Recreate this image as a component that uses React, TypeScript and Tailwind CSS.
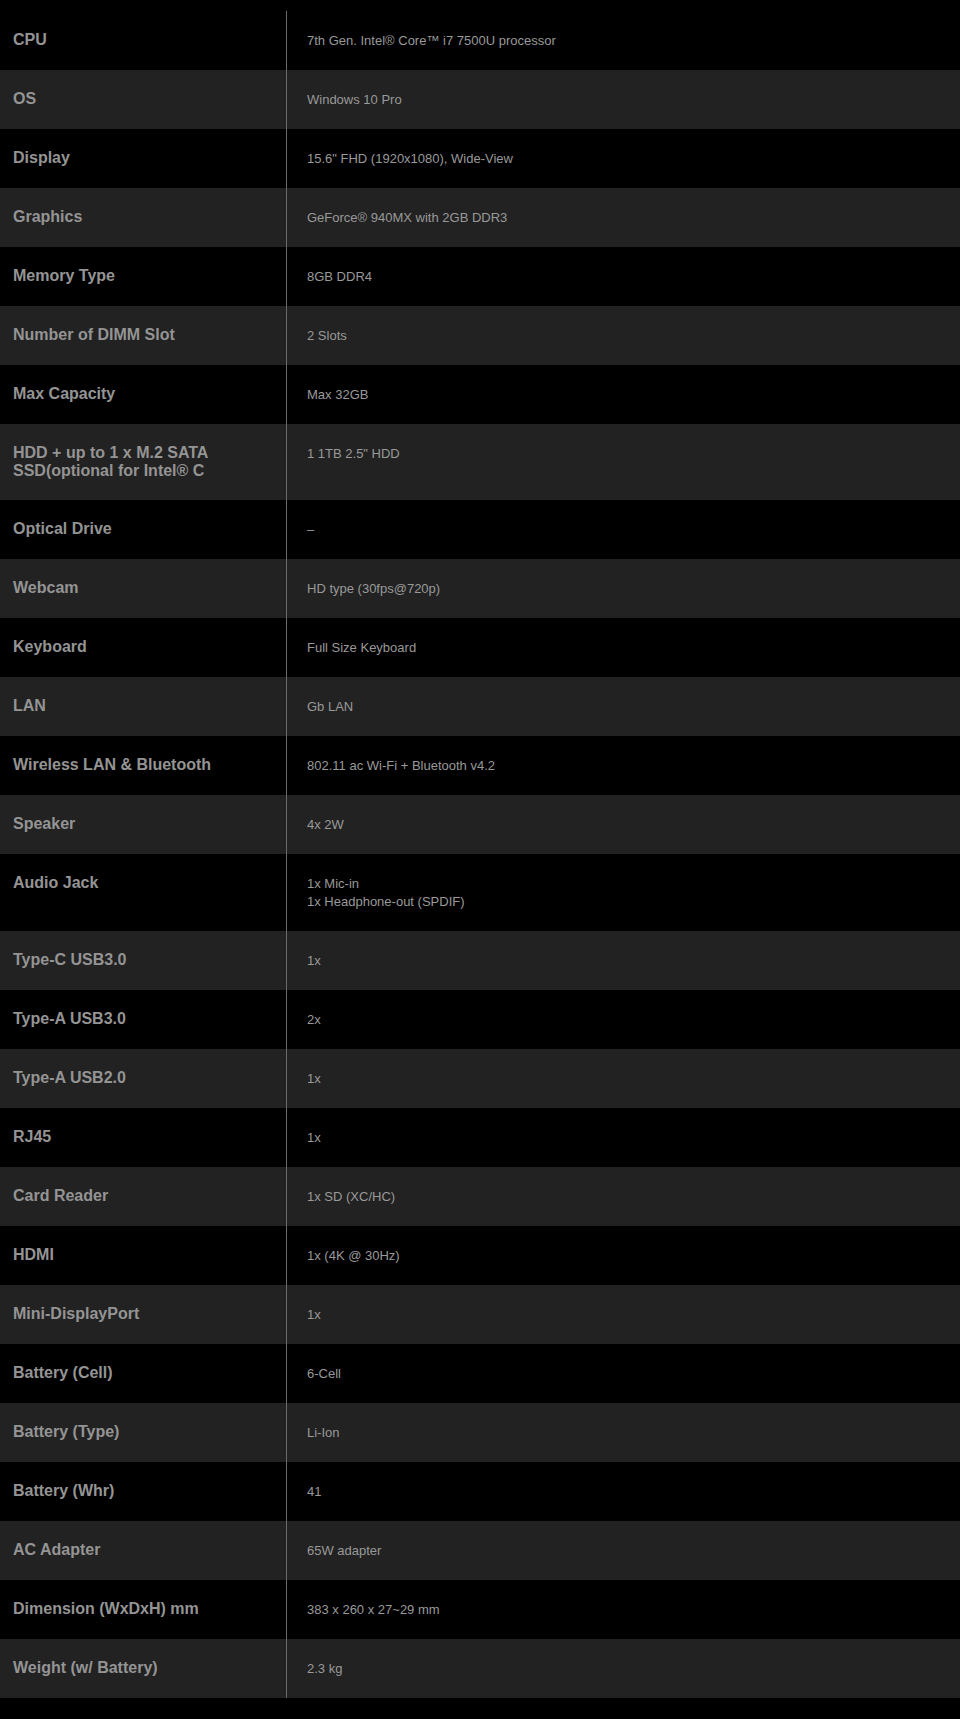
const specs: { label: string; value: string[] }[] = [
  { label: "CPU", value: ["7th Gen. Intel® Core™ i7 7500U processor"] },
  { label: "OS", value: ["Windows 10 Pro"] },
  { label: "Display", value: ["15.6\" FHD (1920x1080), Wide-View"] },
  { label: "Graphics", value: ["GeForce® 940MX with 2GB DDR3"] },
  { label: "Memory Type", value: ["8GB DDR4"] },
  { label: "Number of DIMM Slot", value: ["2 Slots"] },
  { label: "Max Capacity", value: ["Max 32GB"] },
  { label: "HDD + up to 1 x M.2 SATA SSD(optional for Intel® C", value: ["1 1TB 2.5\" HDD"] },
  { label: "Optical Drive", value: ["–"] },
  { label: "Webcam", value: ["HD type (30fps@720p)"] },
  { label: "Keyboard", value: ["Full Size Keyboard"] },
  { label: "LAN", value: ["Gb LAN"] },
  { label: "Wireless LAN & Bluetooth", value: ["802.11 ac Wi-Fi + Bluetooth v4.2"] },
  { label: "Speaker", value: ["4x 2W"] },
  { label: "Audio Jack", value: ["1x Mic-in", "1x Headphone-out (SPDIF)"] },
  { label: "Type-C USB3.0", value: ["1x"] },
  { label: "Type-A USB3.0", value: ["2x"] },
  { label: "Type-A USB2.0", value: ["1x"] },
  { label: "RJ45", value: ["1x"] },
  { label: "Card Reader", value: ["1x SD (XC/HC)"] },
  { label: "HDMI", value: ["1x (4K @ 30Hz)"] },
  { label: "Mini-DisplayPort", value: ["1x"] },
  { label: "Battery (Cell)", value: ["6-Cell"] },
  { label: "Battery (Type)", value: ["Li-Ion"] },
  { label: "Battery (Whr)", value: ["41"] },
  { label: "AC Adapter", value: ["65W adapter"] },
  { label: "Dimension (WxDxH) mm", value: ["383 x 260 x 27~29 mm"] },
  { label: "Weight (w/ Battery)", value: ["2.3 kg"] },
];

export default function App() {
  return (
    <div className="min-h-[1719px] bg-black pt-[11px] pb-[20px] font-['Liberation_Sans',Arial,sans-serif]">
      <div className="flex flex-col">
        {specs.map((row, i) => (
          <div key={row.label} className={`flex min-h-[59px] ${i % 2 === 1 ? "bg-[#222222]" : "bg-black"}`}>
            {/* label */}
            <div className="w-[287px] shrink-0 border-r border-[#6a6a6a] pl-[13px] pr-[70px] py-[20px] text-[16px] leading-[18px] font-bold text-[#949494]">
              {row.label}
            </div>
            {/* value */}
            <div className="flex-1 pl-[20px] pt-[21px] pb-[20px] text-[13px] leading-[18px] text-[#999999]">
              {row.value.map((line) => (
                <div key={line}>{line}</div>
              ))}
            </div>
          </div>
        ))}
      </div>
    </div>
  );
}
